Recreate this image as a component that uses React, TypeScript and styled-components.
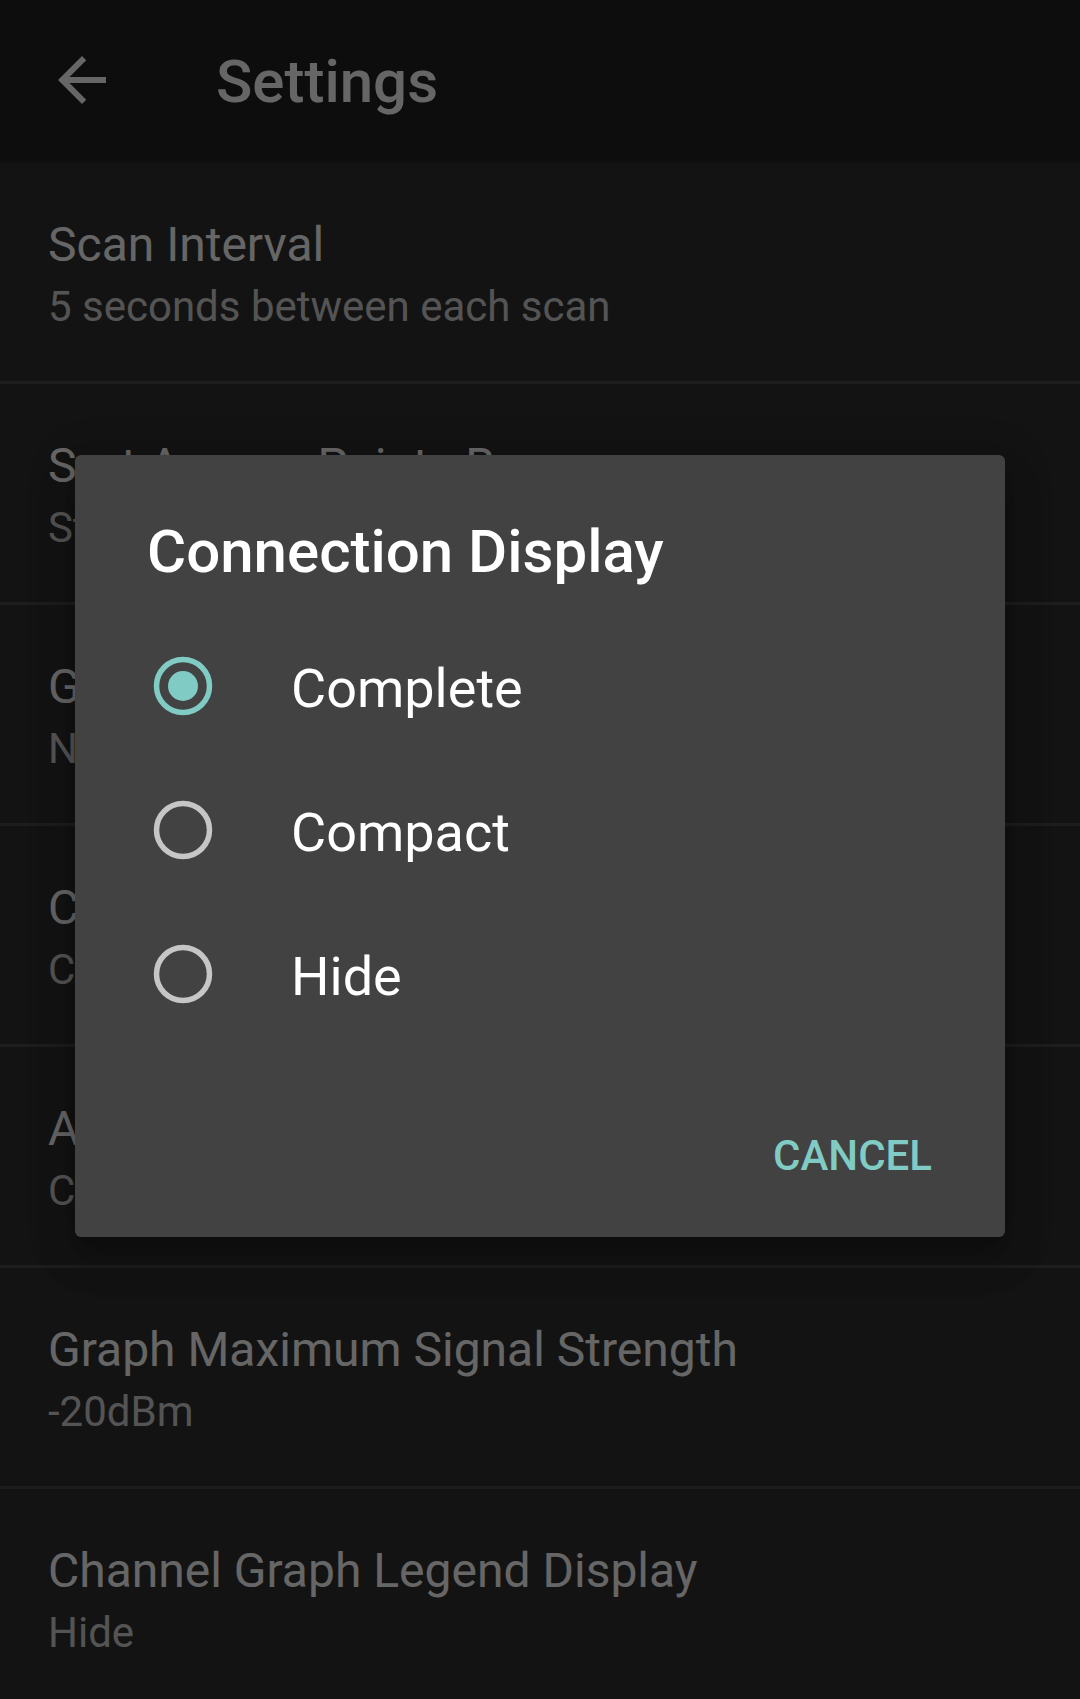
import React from 'react'
import styled, { createGlobalStyle } from 'styled-components'

const GlobalStyle = createGlobalStyle`
  html, body {
    margin: 0;
    padding: 0;
    background: #303030;
  }
  body {
    font-family: Roboto, "Noto Sans", "Liberation Sans", sans-serif;
    -webkit-font-smoothing: antialiased;
  }
`

const Page = styled.div`
  position: relative;
  width: 1080px;
  height: 1699px;
  overflow: hidden;
  background: #303030;
`

const Toolbar = styled.header`
  position: relative;
  z-index: 1;
  display: flex;
  align-items: center;
  height: 160px;
  padding-left: 46px;
  box-sizing: border-box;
  background: #212121;
  box-shadow: 0 2px 5px rgba(0, 0, 0, 0.35);
`

const BackButton = styled.button`
  display: flex;
  align-items: center;
  justify-content: center;
  width: 72px;
  height: 72px;
  padding: 0;
  border: none;
  background: none;
  color: #ffffff;
`

const ToolbarTitle = styled.h1`
  margin: 0 0 0 98px;
  font-size: 60px;
  font-weight: 500;
  color: #ffffff;
  padding-top: 2px;
`

const List = styled.div`
  padding-top: 3px;
`

const Item = styled.div`
  height: 221px;
  box-sizing: border-box;
  padding: 54px 48px 0;
  border-bottom: 3px solid rgba(255, 255, 255, 0.12);
`

const ItemTitle = styled.div`
  font-size: 48px;
  line-height: 56px;
  color: #ffffff;
  white-space: nowrap;
`

const ItemSummary = styled.div`
  margin-top: 4px;
  font-size: 42px;
  line-height: 60px;
  color: #d2d2d2;
  white-space: nowrap;
`

const Scrim = styled.div`
  position: absolute;
  inset: 0;
  z-index: 2;
  display: flex;
  justify-content: center;
  align-items: flex-start;
  padding-top: 455px;
  box-sizing: border-box;
  background: rgba(0, 0, 0, 0.6);
`

const Dialog = styled.div`
  width: 930px;
  padding: 62px 0 28px;
  box-sizing: border-box;
  background: #424242;
  border-radius: 6px;
  box-shadow: 0 24px 38px 3px rgba(0, 0, 0, 0.14), 0 9px 46px 8px rgba(0, 0, 0, 0.12),
    0 11px 15px -7px rgba(0, 0, 0, 0.2);
`

const DialogTitle = styled.h2`
  margin: 0;
  padding: 0 72px;
  font-size: 60px;
  line-height: 70px;
  font-weight: 500;
  color: #ffffff;
`

const Options = styled.div`
  margin-top: 27px;
`

const Option = styled.label`
  display: flex;
  align-items: center;
  gap: 78px;
  height: 144px;
  padding-left: 78px;
`

const OptionText = styled.span`
  padding-top: 4px;
  font-size: 54px;
  color: #ffffff;
`

const ButtonBar = styled.div`
  display: flex;
  justify-content: flex-end;
  margin-top: 55px;
  padding-right: 49px;
`

const TextButton = styled.button`
  height: 108px;
  padding: 0 24px;
  border: none;
  background: none;
  font-family: inherit;
  font-size: 42px;
  font-weight: 500;
  text-transform: uppercase;
  color: #80cbc4;
`

const BackArrow = () => (
  <svg width="72" height="72" viewBox="0 0 24 24" fill="currentColor">
    <path d="M20 11H7.83l5.59-5.59L12 4l-8 8 8 8 1.41-1.41L7.83 13H20v-2z" />
  </svg>
)

const Radio = ({ checked }: { checked: boolean }) => (
  <svg width="60" height="60" viewBox="0 0 60 60">
    <circle
      cx="30"
      cy="30"
      r="26.5"
      fill="none"
      stroke={checked ? '#80cbc4' : 'rgba(255,255,255,0.7)'}
      strokeWidth="5.5"
    />
    {checked && <circle cx="30" cy="30" r="15" fill="#80cbc4" />}
  </svg>
)

const settings = [
  { title: 'Scan Interval', summary: '5 seconds between each scan' },
  { title: 'Sort Access Points By', summary: 'Strength' },
  { title: 'Group Access Points By', summary: 'None' },
  { title: 'Connection Display', summary: 'Complete' },
  { title: 'Access Point Display', summary: 'Complete' },
  { title: 'Graph Maximum Signal Strength', summary: '-20dBm' },
  { title: 'Channel Graph Legend Display', summary: 'Hide' },
]

const options = ['Complete', 'Compact', 'Hide']

export default function App() {
  return (
    <Page>
      <GlobalStyle />
      <Toolbar>
        <BackButton aria-label="Back">
          <BackArrow />
        </BackButton>
        <ToolbarTitle>Settings</ToolbarTitle>
      </Toolbar>
      <List>
        {settings.map((s) => (
          <Item key={s.title}>
            <ItemTitle>{s.title}</ItemTitle>
            <ItemSummary>{s.summary}</ItemSummary>
          </Item>
        ))}
      </List>
      <Scrim>
        <Dialog role="dialog">
          <DialogTitle>Connection Display</DialogTitle>
          <Options>
            {options.map((o, i) => (
              <Option key={o}>
                <Radio checked={i === 0} />
                <OptionText>{o}</OptionText>
              </Option>
            ))}
          </Options>
          <ButtonBar>
            <TextButton>Cancel</TextButton>
          </ButtonBar>
        </Dialog>
      </Scrim>
    </Page>
  )
}
